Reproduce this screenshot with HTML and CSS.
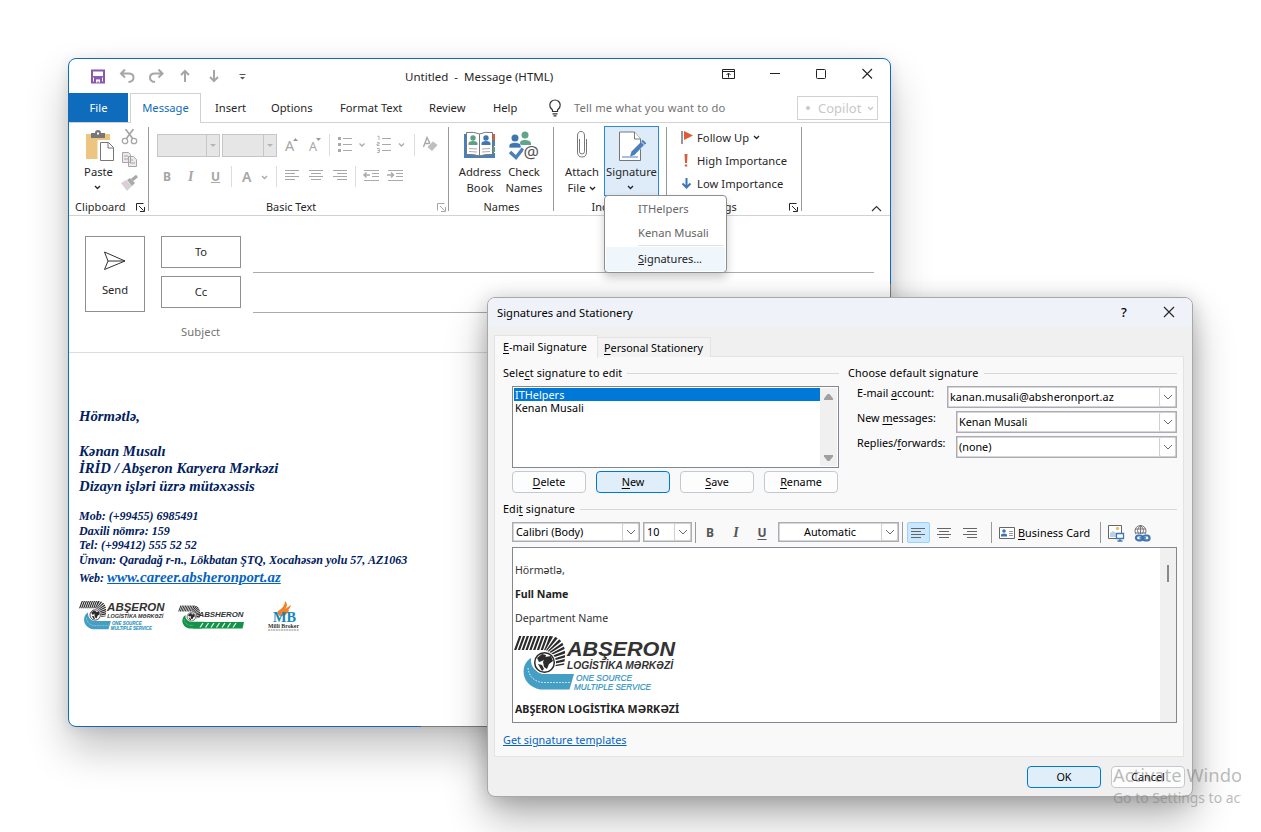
FILE: index.html
```html
<!DOCTYPE html>
<html lang="en">
<head>
<meta charset="utf-8">
<title>Untitled - Message (HTML)</title>
<link rel="stylesheet" href="styles.css">
</head>
<body>
<svg class="defs" width="0" height="0">
  <defs>
    <symbol id="chev" viewBox="0 0 7 5"><path d="M1 1l2.5 2.5L6 1" fill="none" stroke="currentColor" stroke-width="1.3"/></symbol>
    <symbol id="launch" viewBox="0 0 9 9"><path d="M.5 7.500V.5H7.500M3 3l4.500 4.500M8.500 4v4.500H4" fill="none" stroke="currentColor"/></symbol>
    <symbol id="left" viewBox="0 0 14 12"><path d="M0 .5h14M0 3.500h10M0 6.500h14M0 9.500h10" stroke="currentColor"/></symbol>
    <symbol id="center" viewBox="0 0 14 12"><path d="M0 .5h14M2 3.500h10M0 6.500h14M2 9.500h10" stroke="currentColor"/></symbol>
    <symbol id="right" viewBox="0 0 14 12"><path d="M0 .5h14M4 3.500h10M0 6.500h14M4 9.500h10" stroke="currentColor"/></symbol>
    <symbol id="drop" viewBox="0 0 10 6"><path d="M1 1l4 4 4-4" fill="none" stroke="#6a6a6a" stroke-width="1"/></symbol>
    <symbol id="road" viewBox="0 0 62 57">
      <path d="M5.500 8H36Q50 9 54 31" transform="skewX(-20)" fill="none" stroke="#2b2b2b" stroke-width="14" stroke-dasharray="2.300 1.500"/>
      <path d="M17 23C6 29 6 50 26 54.500H55.500L60 39H34C23 39 16 33 17 23z" fill="currentColor"/>
      <path d="M14 33c1 9 7 14 15 14.500h27" fill="none" stroke="#fff" stroke-dasharray="1.500 1.500" stroke-width=".9"/>
      <circle cx="30.500" cy="27.500" r="11.500" fill="#fff"/>
      <circle cx="30.500" cy="27.500" r="9.800" fill="#fff" stroke="#2b2b2b" stroke-width="1.500"/>
      <path d="M23 23l5-4 4 1-1 4-3 2-3 1zM31 22l6-1 2 5-4 3-2 5-3-2-1-5zM24 29l4 1 2 4-2 2z" fill="#2b2b2b"/>
    </symbol>
    <symbol id="abseron" viewBox="0 0 162 57">
      <use href="#road" width="62" height="57" color="#459fc4"/>
      <g font-family="'Liberation Sans',Arial,sans-serif" font-style="italic">
        <text x="53" y="20.500" font-size="21" font-weight="700" fill="#333" textLength="108" lengthAdjust="spacingAndGlyphs">ABŞERON</text>
        <text x="53" y="34" font-size="10.500" font-weight="700" fill="#333" textLength="106" lengthAdjust="spacingAndGlyphs">LOGİSTİKA MƏRKƏZİ</text>
        <text x="62" y="46" font-size="8.800" fill="#2d93bf" stroke="#2d93bf" stroke-width=".2" textLength="56" lengthAdjust="spacingAndGlyphs">ONE SOURCE</text>
        <text x="60" y="55" font-size="8.800" fill="#2d93bf" stroke="#2d93bf" stroke-width=".2" textLength="77" lengthAdjust="spacingAndGlyphs">MULTIPLE SERVICE</text>
      </g>
    </symbol>
  </defs>
</svg>

<main class="mail">
  <header class="titlebar">
    <svg class="quick" width="170" height="18" viewBox="0 0 170 18" fill="none" stroke="#a6a6a6" stroke-width="2">
      <path d="M2 3.500h12v12H2z" stroke="#8a57b0"/><path d="M3 9.800h10" stroke="#8a57b0" stroke-width="1.500"/><path d="M4 10h8v6H4z" fill="#8a57b0" stroke="none"/><path d="M6 12.500h4v3H8.500v-1.500H7.500v1.500H6z" fill="#fff" stroke="none"/>
      <path d="M35 2.500l-4 4 4 4M31.500 6.500h7q5 0 5 4t-5 4.500"/>
      <path d="M68.500 2.500l4 4-4 4M72 6.500h-7q-5 0-5 4t5 4.500"/>
      <path d="M95 15V4M91 8l4-4 4 4M124 3v11M120 10l4 4 4-4"/>
      <path d="M149.500 7.500h6" stroke="#555" stroke-width="1"/><path d="M150 10h5l-2.500 2.500z" fill="#555" stroke="none"/>
    </svg>
    <span class="caption">Untitled&nbsp; -&nbsp; Message (HTML)</span>
    <svg class="winbtns" width="153" height="14" viewBox="0 0 153 14" fill="none" stroke="#222">
      <path d="M.5 2.500h12v9H.5zM.5 4.500h12M6.500 10.500v-4M4.500 8l2-2 2 2"/>
      <path d="M48 6.500h10M94.500 2.500h8q1 0 1 1v7q0 1-1 1h-7q-1 0-1-1v-7q0-1 1-1z"/><path d="M140.500 2l9.500 9.500M150 2l-9.500 9.500" stroke-width="1.100"/>
    </svg>
  </header>

  <nav class="tabs">
    <span class="tab file">File</span><span class="tab active">Message</span>
    <span class="tab insert">Insert</span><span class="tab options">Options</span><span class="tab format">Format Text</span><span class="tab review">Review</span><span class="tab help">Help</span>
    <svg class="bulb" width="14" height="18" viewBox="0 0 14 18" fill="none" stroke="#333" stroke-width="1.200"><path d="M4.500 12.500V11Q1.500 8.500 1.800 6a5 4.800 0 0 1 10.400 0Q12.500 8.500 9.500 11v1.500zM4.500 14.800h5M5.500 16.800h3"/></svg>
    <span class="tell">Tell me what you want to do</span>
    <span class="copilot"><i class="dot"></i><span>Copilot</span><svg width="7" height="5"><use href="#chev"/></svg></span>
  </nav>

  <section class="ribbon">
    <div class="group clipboard">
      <div class="tools">
        <div class="paste">
          <svg width="30" height="32" viewBox="0 0 30 32"><path d="M1 4h24v25H1z" fill="#ecc680"/><path d="M6 8V3h4q0-3 3-3t3 3h4v5z" fill="#777"/><path d="M12 2.500h2v2h-2z" fill="#fff"/><path d="M14 11.500h10l5.500 5.500v14H14z" fill="#fff" stroke="#fff" stroke-width="3"/><path d="M15.500 12.500h8l5 5v13h-13zM23 12.500v5.500h5.500" fill="#fff" stroke="#777"/></svg>
          <span>Paste</span><svg width="7" height="5"><use href="#chev"/></svg>
        </div>
        <svg class="clips" width="17" height="64" viewBox="0 0 17 64" fill="none" stroke="#a6a6a6" stroke-width="1.300">
          <path d="M4.500 0l7.500 10M12.500 0L5 10" stroke-width="1.700"/><circle cx="4" cy="12" r="2.700"/><circle cx="13" cy="12" r="2.700"/>
          <path d="M1.500 23.500h6l2 2v8h-8zM7.500 27.500h5l3 3v7h-8zM3 27h4M3 30h4M9 31h3M9 34h5" fill="#eee7ed" stroke-width="1"/>
          <path d="M0 54l5-3 6 6-5 5z" fill="#d8d0d6" stroke="none"/><path d="M6 51l3-2 5 5-3 3z" fill="#aaa" stroke="none"/><path d="M11 51l5-4" stroke-width="3"/>
        </svg>
      </div>
      <footer><span>Clipboard</span><svg width="9" height="9"><use href="#launch"/></svg></footer>
    </div>

    <div class="group basic">
      <div class="row one">
        <div class="box wide"><b></b></div><div class="box"><b></b></div>
        <span class="grow">A<svg width="5" height="3"><path d="M0 3h5L2.500 0z" fill="#999"/></svg></span>
        <span class="grow small">A<svg width="5" height="3"><path d="M0 0h5L2.500 3z" fill="#999"/></svg></span>
        <svg width="110" height="23" viewBox="0 0 110 23" fill="none" stroke="#aaa"><path d="M.5 0v22M85.500 0v22" stroke="#ddd"/><path d="M14 4.500h9M14 10.500h9M14 16.500h9M53 4.500h9M53 10.500h9M53 16.500h9"/><path d="M9 4.500h3M9 10.500h3M9 16.500h3" stroke-width="3"/><path d="M30.500 9.500l2.500 2.500 2.500-2.500M70 9.500l2.500 2.500L75 9.500" stroke-width="1.300"/><path d="M48.500 2.500l1.500-.5V6M48 8.500h2.200V10H48v1.500h2.500M48 14.500h2.300v4H48M48.500 16.500h2" stroke-width=".9"/><path d="M94.500 13l3.500-9.500 3.500 7M96 9.500h5" stroke-width="1.400"/><path d="M98 13l6-6 5 4-6 6.500z" fill="#c3bdc1" stroke="#fff" stroke-width=".8"/></svg>
      </div>
      <div class="row two">
        <b class="let">B</b><i class="let">I</i><u class="let">U</u>
        <svg class="sep" width="1" height="21"><path d="M.5 0v21" stroke="#ddd"/></svg>
        <span class="font">A</span><svg class="fchev" width="7" height="5"><use href="#chev"/></svg>
        <svg class="sep2" width="1" height="21"><path d="M.5 0v21" stroke="#ddd"/></svg>
        <svg class="al" width="14" height="12"><use href="#left"/></svg><svg class="al" width="14" height="12"><use href="#center"/></svg><svg class="al" width="14" height="12"><use href="#right"/></svg>
        <svg width="50" height="21" viewBox="0 0 50 21" stroke="#aaa" fill="none"><path d="M.5 0v21" stroke="#ddd"/><path d="M9 4.500h15M17 7.500h7M17 10.500h7M9 14.500h15M33 4.500h15M41 7.500h7M41 10.500h7M33 14.500h15"/><path d="M15 9H9M11.500 6.500L9 9l2.500 2.500M32 9h6M36 6.500L38.500 9 36 11.500" stroke-width="1.500"/></svg>
      </div>
      <footer><span>Basic Text</span><svg width="9" height="9"><use href="#launch"/></svg></footer>
    </div>

    <div class="group names">
      <div class="tools">
        <div class="big address">
          <svg width="33" height="29" viewBox="0 0 33 29" preserveAspectRatio="xMidYMin"><path d="M0 3h30v24H0z" fill="#4a81bb"/><path d="M29 3h2v6h-2z" fill="#dd5b38"/><path d="M29 9h2v6h-2z" fill="#4a81bb"/><path d="M29 16h2v5h-2z" fill="#5aa082"/><path d="M29 22h2v5h-2z" fill="#4a81bb"/><path d="M2.500 1.500q8-1 13 1.500 5-2.500 13-1.500v22q-8-.5-13 1.500-5-2-13-1.500zM15.500 3v22" fill="#fff" stroke="#777"/><circle cx="9" cy="7" r="2.700" fill="#5aa082"/><path d="M4.500 14v-1.500q0-2.500 4.500-2.500t4.500 2.500V14z" fill="#5aa082"/><circle cx="22" cy="7" r="2.700" fill="#3d75b5"/><path d="M17.500 14v-1.500q0-2.500 4.500-2.500t4.500 2.500V14z" fill="#3d75b5"/><path d="M5 17.500l8 .5M5 20.500l8 .5M18 18l8-.5M18 21l8-.5" stroke="#aaa"/></svg>
          <span>Address</span><span>Book</span>
        </div>
        <div class="big check">
          <svg width="32" height="32" viewBox="0 0 32 32" preserveAspectRatio="xMidYMin"><circle cx="17" cy="4" r="3.500" fill="#5fa58a"/><path d="M12 14v-2q0-3 5-3t6 3v2z" fill="#5fa58a"/><circle cx="7" cy="7" r="3.500" fill="#3d75b5"/><path d="M1 17v-2q0-3.500 6-3.500t6 3.500v2z" fill="#3d75b5" stroke="#fff" stroke-width=".7"/><path d="M2 21l6 5.500 7-9" fill="none" stroke="#4a81bb" stroke-width="3.500"/><circle cx="23" cy="22" r="8" fill="#fff"/><text x="15.500" y="27" font-family="Noto Sans" font-size="17" fill="#555" textLength="15.500" lengthAdjust="spacingAndGlyphs">@</text></svg>
          <span>Check</span><span>Names</span>
        </div>
      </div>
      <footer><span>Names</span></footer>
    </div>

    <div class="group include">
      <div class="tools">
        <div class="big attach">
          <svg width="12" height="30" viewBox="0 0 12 30" preserveAspectRatio="xMidYMin"><path d="M3.500 8v12.500q0 2.500 2.500 2.500t2.500-2.500V5Q8.500.5 5 .5T1.500 5v16q0 5 4.500 5t4.500-5V8" fill="none" stroke="#777"/></svg>
          <span>Attach</span><span>File <svg width="7" height="5"><use href="#chev"/></svg></span>
        </div>
        <div class="big sign">
          <svg width="28" height="32" viewBox="0 0 28 32"><path d="M1.500 0.500h15l6 7v21.500h-21z" fill="#fff" stroke="#777"/><path d="M16.500 .5v7h6" fill="#fff" stroke="#777"/><path d="M4 25.500h16" stroke="#4a81bb"/><path d="M14 22l9-9" stroke="#fff" stroke-width="6"/><path d="M12 25l1.500-5L23 10.500l3 3L16.500 23.500z" fill="#4a81bb"/><path d="M24 9l3.500 3.500" stroke="#4a81bb" stroke-width="2"/></svg>
          <span>Signature</span><svg class="schev" width="7" height="5"><use href="#chev"/></svg>
        </div>
      </div>
      <footer><span>Include</span></footer>
    </div>

    <div class="group tags">
      <ul>
        <li><svg width="12" height="16" viewBox="0 0 12 16"><path d="M1 1v13" stroke="#777" stroke-width="1.500"/><path d="M3 1l9 4.500L3 10z" fill="#dd5b38"/></svg><span>Follow Up</span><svg class="fu" width="7" height="5"><use href="#chev"/></svg></li>
        <li><svg width="12" height="16" viewBox="0 0 12 16"><path d="M3.500 1h3l-.5 9H4zM3.800 11.500h2.400v2H3.800z" fill="#dd5b38"/></svg><span>High Importance</span></li>
        <li><svg width="12" height="16" viewBox="0 0 12 16"><path d="M5.500 2v9M1.500 7.500l4 4 4-4" fill="none" stroke="#3d75b5" stroke-width="2"/></svg><span>Low Importance</span></li>
      </ul>
      <footer><span>Tags</span><svg width="9" height="9"><use href="#launch"/></svg></footer>
    </div>
    <svg class="collapse" width="11" height="7"><path d="M1 6l4.500-4.500L10 6" fill="none" stroke="#333" stroke-width="1.200"/></svg>
  </section>

  <section class="envelope">
    <div class="send"><svg width="24" height="22" viewBox="0 0 24 22" fill="none" stroke="#333"><path d="M1.500 2l20.500 9L1.500 19.500 5 11zM5 11h17"/></svg><span>Send</span></div>
    <div class="fields">
      <div class="field"><span class="pill">To</span><i></i></div>
      <div class="field"><span class="pill">Cc</span><i></i></div>
      <div class="subject">Subject</div>
    </div>
  </section>

  <article class="letter">
    <p class="l1">Hörmətlə,</p>
    <p class="l2">Kənan Musalı</p>
    <p class="l3">İRİD / Abşeron Karyera Mərkəzi</p>
    <p class="l4">Dizayn işləri üzrə mütəxəssis</p>
    <div class="contact">
      <p>Mob: (+99455) 6985491</p><p>Daxili nömrə: 159</p><p>Tel: (+99412) 555 52 52</p>
      <p class="addr">Ünvan: Qaradağ r-n., Lökbatan ŞTQ, Xocahəsən yolu 57, AZ1063</p>
      <p class="web">Web: <a>www.career.absheronport.az</a></p>
    </div>
    <div class="logos">
      <svg width="86" height="31" viewBox="0 0 162 57" color="#459fc4"><use href="#abseron"/></svg>
      <svg class="green" width="67" height="27" viewBox="0 0 67 27"><use href="#road" x="0" y="1" width="27" height="24.500" color="#119447"/><path d="M17 18h49l-1.500 6.500H15z" fill="#119447"/><path d="M22 23.500l3-4.500M27.500 23.500l3-4.500M33 23.500l3-4.500M38.500 23.500l3-4.500M44 23.500l3-4.500M49.500 23.500l3-4.500M55 23.500l3-4.500" stroke="#e5f4ea" stroke-width="1.300"/><text x="20.500" y="12.500" font-family="Liberation Sans" font-size="8" font-weight="700" font-style="italic" fill="#333" textLength="45" lengthAdjust="spacingAndGlyphs">ABSHERON</text></svg>
      <svg class="mb" width="32" height="31" viewBox="0 0 32 31"><path d="M10 10Q17 6 17 0q4 4 0 8l6-4q-1 5-6 7-4 1-4 5-5-4-3-6z" fill="#ef8127"/><path d="M13 15q2-6 8-6-1 4-6 6z" fill="#ef8127"/><g font-family="Liberation Serif" font-style="normal" font-weight="700"><text x="5" y="20.500" font-size="15" fill="#1487ba" textLength="23" lengthAdjust="spacingAndGlyphs">MB</text><text x="0" y="27" font-size="6.500" fill="#333" textLength="31" lengthAdjust="spacingAndGlyphs">Milli Broker</text></g><path d="M0 29h31" stroke="#888" stroke-dasharray="2 .6"/></svg>
    </div>
  </article>
</main>

<div class="menu"><span>ITHelpers</span><span class="second">Kenan Musali</span><hr><span class="hot"><u>S</u>ignatures...</span></div>
<i class="edge bottom"></i><i class="edge side"></i>

<section class="dialog">
  <header><span>Signatures and Stationery</span><b>?</b><svg width="12" height="12" viewBox="0 0 12 12"><path d="M1 1l10 10M11 1L1 11" stroke="#222" stroke-width="1.100"/></svg></header>
  <nav><span class="t1"><u>E</u>-mail Signature</span><span class="t2"><u>P</u>ersonal Stationery</span></nav>
  <div class="panel">
    <div class="top">
      <div class="pick">
        <h2><span class="h-select">Sele<u>c</u>t signature to edit</span><i></i></h2>
        <div class="list">
          <div class="items"><p class="sel">ITHelpers</p><p>Kenan Musali</p></div>
          <div class="scroll"><svg width="10" height="7"><path d="M0 7V5.500L3.500 1h2L9 5.500V7z" fill="#a0a0a0"/></svg><svg width="10" height="7"><path d="M0 0h9v1.500L5.500 6h-2L0 1.500z" fill="#a0a0a0"/></svg></div>
        </div>
        <div class="btns"><span class="btn"><span><u>D</u>elete</span></span><span class="btn pri"><span><u>N</u>ew</span></span><span class="btn"><span><u>S</u>ave</span></span><span class="btn"><span><u>R</u>ename</span></span></div>
      </div>
      <div class="defaults">
        <h2><span class="h-def">Choose default signature</span><i></i></h2>
        <div class="def first"><label>E-mail <u>a</u>ccount:</label><div class="combo"><span class="mailaddr">kanan.musali@absheronport.az</span><b><svg width="10" height="6"><use href="#drop"/></svg></b></div></div>
        <div class="def"><label>New <u>m</u>essages:</label><div class="combo"><span>Kenan Musali</span><b><svg width="10" height="6"><use href="#drop"/></svg></b></div></div>
        <div class="def"><label>Replies/<u>f</u>orwards:</label><div class="combo"><span>(none)</span><b><svg width="10" height="6"><use href="#drop"/></svg></b></div></div>
      </div>
    </div>
    <h2 class="edit"><span class="h-edit">Edi<u>t</u> signature</span><i></i></h2>
    <div class="bar">
      <div class="combo c1"><span>Calibri (Body)</span><b><svg width="10" height="6"><use href="#drop"/></svg></b></div>
      <div class="combo c2"><span>10</span><b><svg width="10" height="6"><use href="#drop"/></svg></b></div>
      <i class="vr"></i><b class="let">B</b><i class="let">I</i><u class="let">U</u>
      <div class="combo c3"><span>Automatic</span><b><svg width="10" height="6"><use href="#drop"/></svg></b></div>
      <i class="vr v2"></i><span class="on"><svg width="14" height="12"><use href="#left"/></svg></span>
      <svg class="a2" width="14" height="12"><use href="#center"/></svg><svg class="a3" width="14" height="12"><use href="#right"/></svg>
      <i class="vr v3"></i>
      <svg class="card" width="16" height="12" viewBox="0 0 16 12"><path d="M.5.5h15v11H.5z" fill="#fff" stroke="#666"/><circle cx="5" cy="4" r="1.800" fill="#3d75b5"/><path d="M2 9.500V8q0-1.500 3-1.500T8 8v1.500z" fill="#3d75b5"/><path d="M10 4.500h4M10 6.500h4M10 8.500h4" stroke="#999"/></svg>
      <span class="bc"><u>B</u>usiness Card</span><i class="vr v4"></i>
      <svg class="pic" width="17" height="17" viewBox="0 0 17 17"><path d="M.5.5h13v13H.5z" fill="#fff" stroke="#666"/><circle cx="9.500" cy="3.500" r="1.700" fill="#edbd6b"/><path d="M2 12V8l3-2 3 2v4z" fill="#bcd0e8"/><path d="M8.500 8.500h7v5h-7zM12 14v2M9.500 16h5" fill="#fff" stroke="#3d75b5" stroke-width="1.300"/></svg>
      <svg class="globe" width="17" height="17" viewBox="0 0 17 17" fill="none" stroke="#777"><circle cx="6.500" cy="6" r="5.500"/><path d="M6.500 0v10M1 4h11M1 8h11M6.500.5q-6 5 0 10M6.500.5q6 5 0 10"/><path d="M2 9h15v8H2z" fill="#f9f9f9" stroke="none"/><rect x="2" y="10.500" width="6.500" height="4.800" rx="2.400" stroke="#3d75b5" stroke-width="2.200"/><rect x="9" y="10.500" width="6.500" height="4.800" rx="2.400" stroke="#3d75b5" stroke-width="2.200"/><path d="M5.500 12.900h6.500" stroke="#3d75b5" stroke-width="1.600"/></svg>
    </div>
    <div class="editor">
      <div class="doc"><p>Hörmətlə,</p><p class="bold">Full Name</p><p>Department Name</p><svg width="162" height="57"><use href="#abseron"/></svg><p class="bold firm">ABŞERON LOGİSTİKA MƏRKƏZİ</p></div>
      <div class="track"><i></i></div>
    </div>
    <a class="templates">Get signature templates</a>
  </div>
  <footer><span class="btn pri">OK</span><span class="btn">Cancel</span></footer>
</section>
<div class="watermark"><p>Activate Windows</p><p class="sub">Go to Settings to activate</p></div>
</body>
</html>
```
FILE: styles.css
```css
* { box-sizing: border-box; }
body { margin: 0; width: 1261px; height: 832px; overflow: hidden; position: relative; background: #fff; font: 11.2px/16px "Noto Sans", sans-serif; color: #262626; }
p, h2, ul { margin: 0; padding: 0; font-weight: inherit; font-size: inherit; }
svg { display: block; flex: none; }
.defs { position: absolute; }
span, p, label { white-space: nowrap; }

/* message window */
.mail { position: absolute; left: 68px; top: 58px; width: 823px; height: 669px; background: #fff; border: 1px solid #0f6cbd; border-radius: 8px; box-shadow: 0 22px 42px rgba(0,0,0,.24), 0 2px 14px rgba(0,0,0,.1); display: flex; flex-direction: column; }
.titlebar { height: 34px; display: flex; position: relative; }
.quick { margin: 8px 0 0 21px; }
.caption { margin: 10px 0 0 145px; width: 151px; font-size: 11.5px; }
.winbtns { margin: 8px 0 0 166px; }
.tabs { height: 30px; display: flex; border-bottom: 1px solid #d2d2d2; line-height: 29px; }
.tab { flex: none; }
.file { width: 59px; background: #0f6cbd; color: #fff; text-align: center; height: 29px; }
.active { margin-left: 2px; width: 71px; height: 30px; border: 1px solid #d2d2d2; border-bottom: 0; background: #fff; color: #0f6cbd; text-align: center; line-height: 28px; }
.insert { margin-left: 14px; width: 56px; }
.options { width: 69px; }
.format { width: 89px; }
.review { width: 64px; }
.help { width: 55px; }
.bulb { margin-top: 6px; }
.tell { color: #737373; margin-left: 12px; width: 223px; letter-spacing: .14px; }
.copilot { margin-top: 3px; width: 81px; height: 24px; border: 1px solid #d2d2d2; color: #c8c8c8; display: flex; align-items: center; font-size: 13px; }
.copilot .dot { width: 4px; height: 4px; border-radius: 2px; background: #c8c8c8; margin-left: 8px; }
.copilot span { margin-left: 8px; width: 49px; }
.ribbon { height: 93px; border-bottom: 1px solid #d2d2d2; display: flex; position: relative; }
.group { position: relative; display: flex; flex-direction: column; height: 92px; flex: none; }
.group::after { content: ""; position: absolute; right: 0; top: 4px; width: 1px; height: 84px; background: #9b9b9b; }
.group footer { display: flex; justify-content: center; margin-top: auto; height: 16px; line-height: 16px; font-size: 10.9px; }
.tools { display: flex; }
.clipboard { width: 80px; }
.paste { margin: 7px 0 0 16px; width: 30px; display: flex; flex-direction: column; align-items: center; }
.paste span { margin: 2px 0 5px -3px; }
.paste > svg:last-child { margin-left: -5px; }
.clips { margin: 6px 0 0 6px; }
.clipboard footer { justify-content: flex-start; padding-left: 6px; }
.clipboard footer span { width: 61px; letter-spacing: .1px; }
.clipboard footer svg { margin-top: 4px; }
.basic { width: 300px; color: #a6a6a6; }
.row { display: flex; }
.one { margin: 11px 0 0 8px; height: 23px; }
.box { width: 55px; height: 23px; background: #e6e6e6; border: 1px solid #c6c6c6; margin-right: 2px; display: flex; justify-content: flex-end; }
.box.wide { width: 63px; }
.box b { width: 13px; border-left: 1px solid #c6c6c6; display: flex; }
.box b::after { content: ""; margin: 9px 0 0 3px; border: 3px solid transparent; border-top-color: #b5b5b5; height: 0; }
.grow { margin-left: 6px; width: 24px; font-size: 14.5px; line-height: 23px; display: flex; }
.grow svg { margin: 4px 0 0 -1px; }
.grow.small { margin-left: 0; width: 20px; font-size: 12.5px; line-height: 25px; }
.two { margin: 9px 0 0 14px; height: 21px; line-height: 21px; align-items: flex-start; }
.two .let { width: 24px; font-size: 12px; font-weight: 700; }
.two i.let { font-family: "Liberation Serif", serif; font-size: 14px; }
.two i.let { padding-left: 1px; }
.two .sep { margin-left: -4px; }
.font { margin-left: 10px; width: 19px; font-size: 14px; font-weight: 600; }
.fchev { margin-top: 9px; }
.sep2 { margin: 0 8px; }
.al { margin: 4px 10px 0 0; }
.al + svg:not(.al) { margin-left: -2px; }
.basic footer svg { margin: 4px 0 0 121px; color: #a6a6a6; }
.basic footer { justify-content: flex-start; padding-left: 117px; color: #262626; }
.names { width: 105px; }
.big { display: flex; flex-direction: column; align-items: center; height: 67px; }
.big span { display: flex; align-items: center; height: 16px; flex: none; }
.big span svg { margin-left: 4px; }
.big > svg { height: 33px; }
.address { margin: 8px 0 0 9px; width: 44px; }
.check { margin: 8px 0 0 2px; width: 40px; }
.include { width: 113px; }
.attach { margin: 8px 0 0 10px; width: 36px; }
.sign { margin: 3px 0 0 4px; width: 55px; height: 70px; background: #deebf8; border: 1px solid #2b88d8; padding-top: 4px; }
.sign .schev { height: 5px; margin: 5px 2px 0 0; }
.tags { width: 135px; }
.tags ul { list-style: none; margin: 3px 0 0 14px; }
.tags li { display: flex; height: 23px; align-items: center; }
.tags li span { margin-left: 4px; letter-spacing: .05px; }
.tags li:first-child span { width: 56px; }
.tags footer span { margin-left: -19px; }
.tags footer svg { position: absolute; left: 122px; top: 80px; }
.collapse { margin: 82px 0 0 69px; }
.envelope { height: 137px; border-bottom: 1px solid #dcdcdc; display: flex; padding: 20px 16px 0; }
.send { width: 60px; height: 76px; border: 1px solid #8f8f8f; display: flex; flex-direction: column; align-items: center; padding-top: 13px; }
.send span { margin-top: 10px; }
.fields { margin-left: 16px; flex: 1; }
.field { display: flex; height: 40px; }
.pill { width: 80px; height: 32px; border: 1px solid #8f8f8f; text-align: center; line-height: 30px; }
.field i { margin-left: 12px; flex: 1; height: 37px; border-bottom: 1px solid #ababab; }
.subject { color: #737373; margin: 8px 0 0 20px; letter-spacing: .1px; }
.letter { padding: 54px 0 0 10px; font: italic 700 14.75px/18px "Liberation Serif", serif; color: #002060; }
.l2 { margin-top: 17px; }
.l3, .l4 { line-height: 17.5px; }
.contact { margin-top: 14px; font-size: 12px; line-height: 14.7px; }
.web { line-height: 19px; }
.web a { font-size: 14.9px; color: #0563c1; text-decoration: underline; }
.logos { display: flex; margin-top: 12px; align-items: flex-start; }
.green { margin: 4px 0 0 13px; }
.mb { margin: 1px 0 0 23px; }
.menu { position: absolute; left: 604px; top: 195px; width: 123px; height: 78px; background: #fff; border: 1px solid #8f8f8f; border-radius: 4px; box-shadow: 0 5px 10px rgba(0,0,0,.2); color: #666; padding: 1px; display: flex; flex-direction: column; line-height: 24px; font-size: 11.2px; }
.menu span { padding-left: 32px; }
.menu hr { margin: 0 0 1px 32px; border: 0; height: 1px; width: 86px; background: #e2e2e2; }
.menu .hot { background: #eff6fc; color: #222; font-size: 11px; }
.edge { position: absolute; background: #7d7d7d; }
.edge.bottom { left: 421px; top: 726px; width: 67px; height: 1px; }
.edge.side { left: 890px; top: 284px; width: 1px; height: 14px; }

/* signatures dialog */
.dialog { position: absolute; left: 487px; top: 297px; width: 706px; height: 500px; background: #f0f0f0; border: 1px solid #a8a8a8; border-radius: 8px; box-shadow: 0 20px 40px rgba(0,0,0,.3), 0 2px 20px rgba(0,0,0,.18); color: #000; font-size: 10.8px; overflow: hidden; }
.dialog > header { height: 29px; background: #eff3f9; display: flex; line-height: 29px; padding-left: 9px; }
.dialog > header span { width: 624px; font-size: 11.2px; }
.dialog > header b { font-size: 13px; font-weight: 500; width: 42px; }
.dialog > header svg { margin-top: 8px; }
.dialog nav { display: flex; height: 30px; padding: 8px 0 0 6px; align-items: flex-end; position: relative; }
.t1 { height: 23px; width: 104px; background: #f9f9f9; border: 1px solid #e3e3e3; border-bottom: 0; padding-left: 8px; line-height: 22px; margin-bottom: -1px; z-index: 1; letter-spacing: .06px; }
.t2 { height: 20px; width: 113px; border: 1px solid #e3e3e3; border-bottom: 0; border-left: 0; padding-left: 6px; line-height: 20px; background: #f3f3f3; }
.dialog u { text-underline-offset: 2px; }
.panel { margin-left: 6px; width: 690px; height: 401px; margin-top: -1px; background: #f9f9f9; border: 1px solid #e3e3e3; padding: 8px 6px 0 8px; }
.top { display: flex; }
h2 { display: flex; height: 16px; align-items: center; letter-spacing: .12px; }
h2 i { flex: 1; height: 1px; background: #d8d8d8; }
.pick { width: 336px; }
.list { margin: 5px 0 0 9px; height: 82px; border: 1px solid #828790; background: #fff; padding: 1px; display: flex; line-height: 13px; }
.items { width: 306px; letter-spacing: .05px; }
.items p { padding-left: 1px; }
.sel { background: #0078d7; color: #fff; }
.scroll { flex: 1; background: #f0f0f0; display: flex; flex-direction: column; justify-content: space-between; align-items: center; padding: 5px 0 4px; }
.btns { display: flex; gap: 10px; margin: 3px 0 0 9px; }
.btn { width: 74px; height: 22px; border: 1px solid #c3c9d0; border-radius: 4px; background: #fdfdfd; text-align: center; line-height: 20px; }
.btn.pri { background: #e0eef9; border: 1px solid #0078d4; }
.defaults { margin-left: 9px; width: 329px; }
.h-select { width: 124px; } .h-def { width: 136px; } .h-edit { width: 77px; }
.def { display: flex; height: 25px; padding-left: 9px; }
.def.first { margin-top: 5px; }
.def label { width: 99px; margin-top: -1px; }
.first label { width: 90px; }
.combo { flex: 1; height: 22px; border: 1px solid #abadb3; background: #fff; display: flex; line-height: 20px; box-shadow: inset 0 0 0 .5px #abadb3; }
.combo span { flex: 1; padding-left: 2px; }
.mailaddr { letter-spacing: .1px; }
.combo b { width: 17px; border: 1px solid #d0d0d0; border-radius: 2px; display: flex; align-items: center; justify-content: center; }
.edit { margin-top: 8px; }
.bar { display: flex; margin: 5px 0 0 9px; height: 22px; align-items: flex-start; color: #222; }
.bar .combo { flex: none; height: 20px; line-height: 18px; color: #000; }
.c1 { width: 128px; } .c2 { width: 49px; margin-left: 3px; } .bar .c3 { width: 121px; margin-left: 3px; }
.c1 span, .c2 span { padding-left: 3px; }
.c3 span { padding-left: 25px; }
.vr { width: 1px; height: 21px; background: #999; margin-left: 3px; }
.bar .let { width: 26px; text-align: center; font-size: 12px; line-height: 22px; font-weight: 700; color: #555; }
.bar i.let { font-family: "Liberation Serif", serif; font-size: 14px; }
.bar b.let { margin-left: 1px; }
.on { margin-left: 4px; width: 23px; height: 21px; background: #cce8ff; border: 1px solid #99d1ff; border-radius: 2px; padding: 5px 0 0 3px; color: #666; }
.a2, .a3 { margin: 6px 0 0 7px; color: #666; }
.a3 { margin-left: 12px; }
.v3 { margin-left: 14px; }
.card { margin: 5px 0 0 7px; }
.bc { margin: 3px 0 0 3px; width: 73px; color: #000; letter-spacing: .07px; }
.v4 { margin-left: 9px; }
.pic { margin: 3px 0 0 7px; }
.globe { margin: 3px 0 0 9px; }
.editor { margin: 3px 0 0 9px; height: 176px; border: 1px solid #828790; background: #fff; display: flex; color: #333; }
.doc { flex: 1; padding: 14px 0 0 2px; }
.doc p { height: 24px; line-height: 16px; font-size: 10.6px; }
.doc .bold { font-weight: 700; color: #222; }
.doc .firm { font-size: 10.65px; }
.doc svg { margin: 1px 0 9px -1px; }
.track { width: 16px; background: #f0f0f0; padding: 17px 0 0 7px; }
.track i { display: block; width: 2px; height: 17px; background: #888; }
.templates { display: inline-block; margin-top: 9px; color: #0563c1; text-decoration: underline; letter-spacing: .05px; }
.dialog > footer { display: flex; gap: 10px; padding: 9px 0 0 539px; }
.watermark { position: absolute; left: 1113px; top: 762px; width: 128px; height: 50px; overflow: hidden; color: rgba(120,120,120,.5); font-size: 18.4px; line-height: 26px; }
.watermark .sub { font-size: 13.9px; line-height: 20px; }
```
